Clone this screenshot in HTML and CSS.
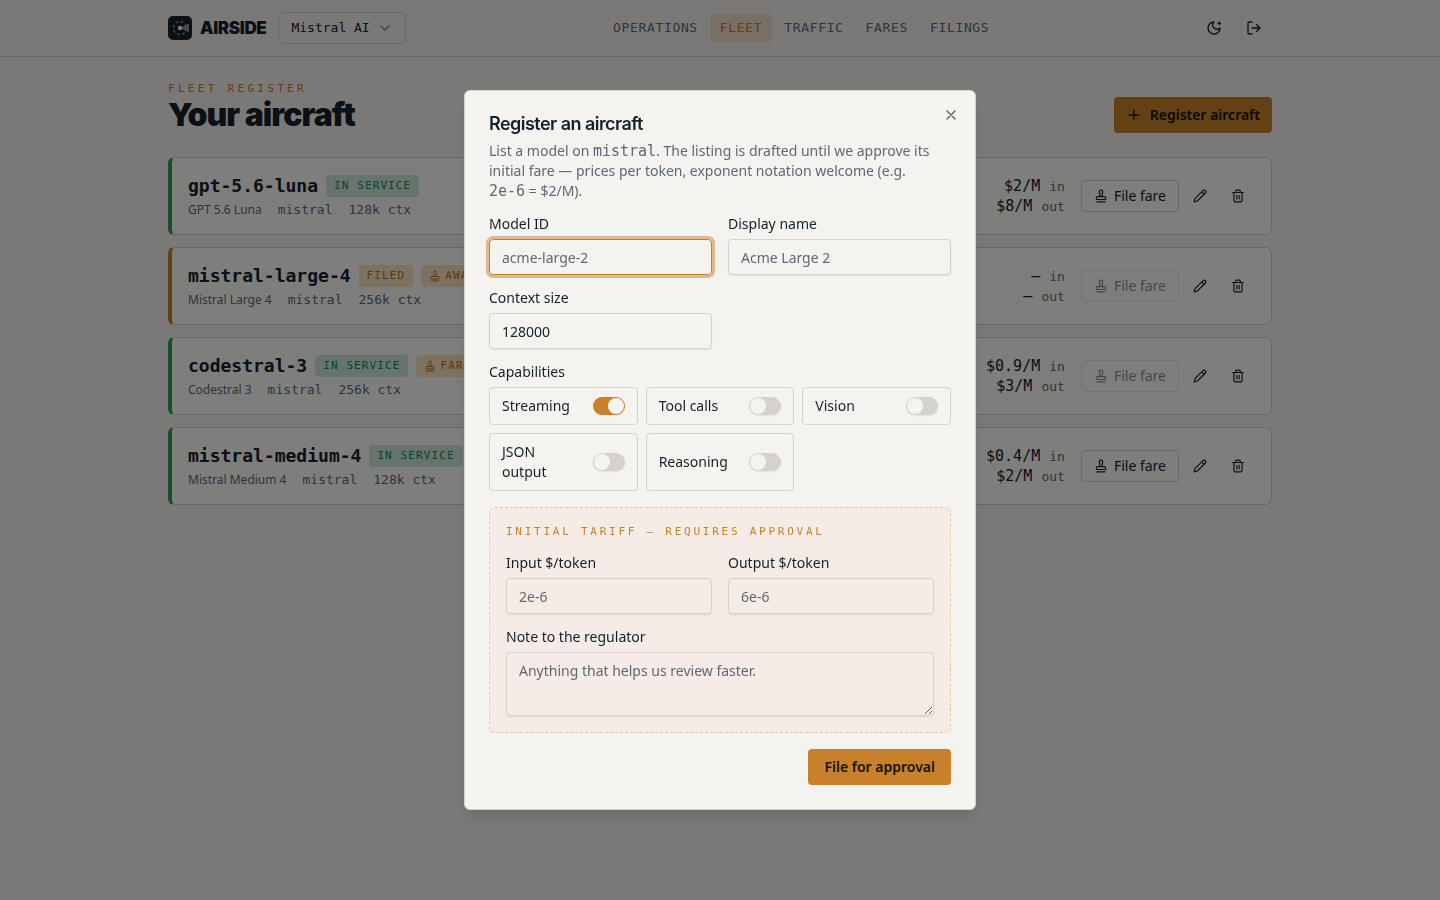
FILE: index.html
```html
<!DOCTYPE html>
<html lang="en">
<head>
<meta charset="utf-8">
<meta name="viewport" content="width=device-width, initial-scale=1">
<title>Airside – Fleet</title>
<link rel="stylesheet" href="styles.css">
</head>
<body>
<svg class="sprite" aria-hidden="true">
  <symbol id="stamp" viewBox="0 0 24 24"><path d="M5 22h14M19.27 13.73A2.5 2.5 0 0 0 17.5 13h-11A2.5 2.5 0 0 0 4 15.5V17a1 1 0 0 0 1 1h14a1 1 0 0 0 1-1v-1.500a2.500 2.500 0 0 0-.730-1.770ZM14 13V8.500C14 7 15 7 15 5a3 3 0 0 0-6 0c0 2 1 2 1 3.500V13"/></symbol>
  <symbol id="pencil" viewBox="0 0 24 24"><path d="M21.174 6.812a1 1 0 0 0-3.986-3.987L3.842 16.174a2 2 0 0 0-.5.830l-1.321 4.352a.5.5 0 0 0 .623.622l4.353-1.320a2 2 0 0 0 .830-.497zM15 5l4 4"/></symbol>
  <symbol id="trash" viewBox="0 0 24 24"><path d="M3 6h18M19 6v14c0 1-1 2-2 2H7c-1 0-2-1-2-2V6M8 6V4c0-1 1-2 2-2h4c1 0 2 1 2 2v2M10 11v6M14 11v6"/></symbol>
</svg>

<header class="topbar">
  <div class="container topbar-row">
    <div class="brand-area">
      <a class="brand" href="#">
        <svg class="logo" viewBox="0 0 24 24" aria-hidden="true"><rect width="24" height="24" rx="5" fill="#14202c"/><circle cx="12" cy="12" r="6.500" fill="none" stroke="#a3a8aa" stroke-width="1.200" stroke-dasharray="2.600 2.500"/><path d="M12 12l9-4.500v9z" fill="#8d9396"/><circle cx="12" cy="12" r="2.200" fill="#f4f3ef"/></svg>
        AIRSIDE
      </a>
      <button class="org" type="button">Mistral AI
        <svg class="icon" viewBox="0 0 24 24"><path d="m6 9 6 6 6-6"/></svg>
      </button>
    </div>
    <nav class="nav">
      <a href="#">Operations</a><a class="active" href="#">Fleet</a><a href="#">Traffic</a><a href="#">Fares</a><a href="#">Filings</a>
    </nav>
    <div class="tools">
      <button class="icon-button" type="button" aria-label="Toggle theme"><svg class="icon" viewBox="0 0 24 24"><path d="M12 3a6 6 0 0 0 9 9 9 9 0 1 1-9-9M20 3v4M22 5h-4"/></svg></button>
      <button class="icon-button" type="button" aria-label="Sign out"><svg class="icon" viewBox="0 0 24 24"><path d="M9 21H5a2 2 0 0 1-2-2V5a2 2 0 0 1 2-2h4M16 17l5-5-5-5M21 12H9"/></svg></button>
    </div>
  </div>
</header>

<main class="container page">
  <div class="page-head">
    <div>
      <p class="eyebrow wide">Fleet register</p>
      <h1>Your aircraft</h1>
    </div>
    <button class="primary register" type="button"><svg class="icon" viewBox="0 0 24 24"><path d="M5 12h14M12 5v14"/></svg>Register aircraft</button>
  </div>

  <div class="fleet">
    <article class="card">
      <div class="info">
        <div class="title-row"><h2>gpt-5.6-luna</h2><span class="badge ok">In service</span></div>
        <p class="meta"><span>GPT 5.6 Luna</span><span class="mono">mistral</span><span class="mono">128k ctx</span></p>
      </div>
      <div class="side">
        <div class="price"><div>$2/M <small>in</small></div><div>$8/M <small>out</small></div></div>
        <button class="file" type="button"><svg class="icon"><use href="#stamp"/></svg>File fare</button>
        <div class="actions"><button class="icon-button" type="button" aria-label="Edit"><svg class="icon"><use href="#pencil"/></svg></button><button class="icon-button" type="button" aria-label="Delete"><svg class="icon"><use href="#trash"/></svg></button></div>
      </div>
    </article>
    <article class="card filed">
      <div class="info">
        <div class="title-row"><h2>mistral-large-4</h2><span class="badge warn">Filed</span><span class="badge warn"><svg class="icon"><use href="#stamp"/></svg>Awaiting</span></div>
        <p class="meta"><span>Mistral Large 4</span><span class="mono">mistral</span><span class="mono">256k ctx</span></p>
      </div>
      <div class="side">
        <div class="price"><div>— <small>in</small></div><div>— <small>out</small></div></div>
        <button class="file" type="button" disabled><svg class="icon"><use href="#stamp"/></svg>File fare</button>
        <div class="actions"><button class="icon-button" type="button" aria-label="Edit"><svg class="icon"><use href="#pencil"/></svg></button><button class="icon-button" type="button" aria-label="Delete"><svg class="icon"><use href="#trash"/></svg></button></div>
      </div>
    </article>
    <article class="card">
      <div class="info">
        <div class="title-row"><h2>codestral-3</h2><span class="badge ok">In service</span><span class="badge warn"><svg class="icon"><use href="#stamp"/></svg>Fare</span></div>
        <p class="meta"><span>Codestral 3</span><span class="mono">mistral</span><span class="mono">256k ctx</span></p>
      </div>
      <div class="side">
        <div class="price"><div>$0.9/M <small>in</small></div><div>$3/M <small>out</small></div></div>
        <button class="file" type="button" disabled><svg class="icon"><use href="#stamp"/></svg>File fare</button>
        <div class="actions"><button class="icon-button" type="button" aria-label="Edit"><svg class="icon"><use href="#pencil"/></svg></button><button class="icon-button" type="button" aria-label="Delete"><svg class="icon"><use href="#trash"/></svg></button></div>
      </div>
    </article>
    <article class="card">
      <div class="info">
        <div class="title-row"><h2>mistral-medium-4</h2><span class="badge ok">In service</span></div>
        <p class="meta"><span>Mistral Medium 4</span><span class="mono">mistral</span><span class="mono">128k ctx</span></p>
      </div>
      <div class="side">
        <div class="price"><div>$0.4/M <small>in</small></div><div>$2/M <small>out</small></div></div>
        <button class="file" type="button"><svg class="icon"><use href="#stamp"/></svg>File fare</button>
        <div class="actions"><button class="icon-button" type="button" aria-label="Edit"><svg class="icon"><use href="#pencil"/></svg></button><button class="icon-button" type="button" aria-label="Delete"><svg class="icon"><use href="#trash"/></svg></button></div>
      </div>
    </article>
  </div>
</main>

<div class="overlay">
  <form class="dialog" role="dialog" aria-modal="true" aria-labelledby="dialog-title">
    <button class="close" type="button" aria-label="Close"><svg class="icon" viewBox="0 0 24 24"><path d="M18 6 6 18M6 6l12 12"/></svg></button>
    <div class="dialog-head">
      <h2 id="dialog-title">Register an aircraft</h2>
      <p>List a model on <span class="mono">mistral</span>. The listing is drafted until we approve its initial fare — prices per token, exponent notation welcome (e.g. <span class="formula"><span class="mono">2e-6</span> = $2/M).</span></p>
    </div>
    <div class="fields">
      <div class="field"><label for="model">Model ID</label><input class="focused" id="model" type="text" placeholder="acme-large-2"></div>
      <div class="field"><label for="name">Display name</label><input id="name" type="text" placeholder="Acme Large 2"></div>
      <div class="field"><label for="context">Context size</label><input id="context" type="text" value="128000"></div>
    </div>
    <div class="field">
      <span class="group-label" id="caps">Capabilities</span>
      <div class="toggles" role="group" aria-labelledby="caps">
        <label class="toggle">Streaming<input type="checkbox" role="switch" checked></label>
        <label class="toggle">Tool calls<input type="checkbox" role="switch"></label>
        <label class="toggle">Vision<input type="checkbox" role="switch"></label>
        <label class="toggle">JSON output<input type="checkbox" role="switch"></label>
        <label class="toggle">Reasoning<input type="checkbox" role="switch"></label>
      </div>
    </div>
    <section class="tariff">
      <p class="eyebrow">Initial tariff — requires approval</p>
      <div class="fields">
        <div class="field"><label for="input-price">Input $/token</label><input id="input-price" type="text" placeholder="2e-6"></div>
        <div class="field"><label for="output-price">Output $/token</label><input id="output-price" type="text" placeholder="6e-6"></div>
      </div>
      <div class="field"><label for="note">Note to the regulator</label><textarea id="note" placeholder="Anything that helps us review faster."></textarea></div>
    </section>
    <button class="primary submit" type="submit">File for approval</button>
  </form>
</div>
</body>
</html>
```
FILE: styles.css
```css
:root {
  --bg: #f4f3ef;
  --card: #fcfcfa;
  --ink: #14202c;
  --muted: #5f6874;
  --line: #d4d2cb;
  --amber: #c8802b;
  --sans: "Noto Sans", sans-serif;
  --mono: "DejaVu Sans Mono", monospace;
  --display: Inter, sans-serif;
}
* { box-sizing: border-box; }
body {
  margin: 0;
  min-height: 100vh;
  background: var(--bg);
  color: var(--ink);
  font: 14px/20px var(--sans);
}
h1, h2, p { margin: 0; }
a { color: inherit; text-decoration: none; }
button, input, textarea { font: inherit; color: inherit; }
button { padding: 0; border: 0; background: none; }
.sprite { display: none; }
.mono { font-family: var(--mono); }
.icon {
  width: 16px;
  height: 16px;
  flex: none;
  fill: none;
  stroke: currentColor;
  stroke-width: 2;
  stroke-linecap: round;
  stroke-linejoin: round;
}
.container { max-width: 1152px; margin: 0 auto; padding: 0 24px; }

.topbar { border-bottom: 1px solid var(--line); }
.topbar-row { height: 56px; display: flex; align-items: center; justify-content: space-between; }
.brand-area, .brand, .tools { display: flex; align-items: center; }
.brand-area { gap: 12px; }
.brand { gap: 8px; font: 900 17px/24px var(--display); letter-spacing: -0.02em; }
.logo { width: 24px; height: 24px; }
.org {
  width: 128px;
  height: 32px;
  padding: 0 12px;
  display: flex;
  align-items: center;
  justify-content: space-between;
  border: 1px solid var(--line);
  border-radius: 4px;
  font: 13px/20px var(--mono);
  white-space: nowrap;
}
.org .icon { opacity: .5; }
.nav { display: flex; gap: 2px; }
.nav a {
  padding: 4px 10px;
  border-radius: 4px;
  color: var(--muted);
  font: 13px/20px var(--mono);
  letter-spacing: 0.05em;
  text-transform: uppercase;
}
.nav .active { color: var(--amber); background: #f0dfcd; }
.tools { gap: 4px; }
.icon-button { width: 36px; height: 36px; display: grid; place-items: center; }

.page { padding-top: 24px; }
.page-head { display: flex; align-items: flex-end; justify-content: space-between; margin-bottom: 24px; }
.eyebrow {
  color: var(--amber);
  font: 11px/16px var(--mono);
  letter-spacing: 0.25em;
  text-transform: uppercase;
}
.wide { letter-spacing: 0.3em; }
h1 { font: 900 32px/36px var(--display); letter-spacing: -0.03em; }
.primary {
  height: 36px;
  padding: 0 16px;
  border-radius: 4px;
  background: var(--amber);
  color: #14130f;
  font-weight: 700;
}
.register { display: flex; align-items: center; gap: 8px; padding: 0 12px; }
.register, .submit { font-weight: 600; }

.fleet { display: grid; gap: 12px; }
.card {
  min-height: 78px;
  padding: 12px 16px;
  display: flex;
  align-items: center;
  justify-content: space-between;
  border: 1px solid var(--line);
  border-left: 4px solid #2f9e55;
  border-radius: 6px;
  background: var(--card);
}
.filed { border-left-color: var(--amber); }
.title-row { display: flex; align-items: center; gap: 8px; height: 28px; }
.title-row h2 { font: 700 18px/24px var(--mono); white-space: nowrap; }
.badge {
  height: 22px;
  padding: 0 8px;
  display: flex;
  align-items: center;
  gap: 4px;
  border-radius: 4px;
  font: 11px/16px var(--mono);
  letter-spacing: 0.1em;
  text-transform: uppercase;
}
.badge .icon { width: 12px; height: 12px; }
.ok { background: #cfe8da; color: #0c8a5a; }
.warn { background: #fbe3c2; color: #c46a10; }
.meta { display: flex; gap: 16px; color: var(--muted); font-size: 12px; }
.meta .mono { font-size: 13px; }
.side { display: flex; align-items: center; }
.price { margin-right: 16px; text-align: right; font: 15px/20px var(--mono); }
.price div { height: 20px; }
.price small { color: var(--muted); font-size: 13px; }
.file {
  height: 32px;
  padding: 0 12px;
  display: flex;
  align-items: center;
  gap: 6px;
  border: 1px solid var(--line);
  border-radius: 4px;
}
.file .icon, .actions .icon { width: 14px; height: 14px; }
.file:disabled { opacity: .5; }
.actions { display: flex; gap: 4px; margin-left: 4px; }
.actions .icon-button { width: 34px; height: 32px; }

.overlay {
  position: fixed;
  inset: 0;
  padding: 16px;
  display: grid;
  place-items: center;
  background: rgb(0 0 0 / 50%);
}
.dialog {
  position: relative;
  width: 100%;
  max-width: 512px;
  padding: 24px;
  display: grid;
  gap: 16px;
  border: 1px solid var(--line);
  border-radius: 6px;
  background: var(--bg);
  box-shadow: 0 10px 15px -3px rgb(0 0 0 / 10%), 0 4px 6px -4px rgb(0 0 0 / 10%);
}
.close { position: absolute; top: 16px; right: 16px; width: 16px; height: 16px; opacity: .7; }
.dialog-head { display: grid; gap: 8px; }
.dialog-head h2 { font: 600 18px/18px var(--display); letter-spacing: -0.03em; }
.dialog-head p { color: var(--muted); }
.dialog-head .mono { font-size: 15px; line-height: 16px; }
.formula { white-space: nowrap; }
.fields { display: grid; grid-template-columns: 1fr 1fr; gap: 16px; }
.field { display: grid; gap: 8px; line-height: 14px; }
.field input[type="text"], textarea {
  width: 100%;
  height: 36px;
  padding: 4px 12px;
  border: 1px solid var(--line);
  border-radius: 4px;
  background: transparent;
  box-shadow: 0 1px 2px rgb(0 0 0 / 8%);
  outline: none;
}
::placeholder { color: var(--muted); opacity: 1; }
.field input.focused[type="text"] { border-color: var(--amber); box-shadow: 0 0 0 3px rgb(200 128 43 / 50%); }
.field textarea { height: 64px; padding: 8px 12px; line-height: 20px; display: block; resize: vertical; }
.toggles { display: grid; grid-template-columns: repeat(3, 1fr); gap: 8px; }
.toggle {
  padding: 8px 12px;
  min-height: 38px;
  display: flex;
  align-items: center;
  justify-content: space-between;
  gap: 16px;
  border: 1px solid var(--line);
  border-radius: 4px;
  line-height: 20px;
}
.toggle input {
  appearance: none;
  flex: none;
  width: 32px;
  height: 18px;
  margin: 0;
  padding: 1px;
  display: flex;
  border-radius: 9px;
  background: var(--line);
  box-shadow: 0 1px 2px rgb(0 0 0 / 8%);
}
.toggle input::before { content: ""; width: 16px; height: 16px; border-radius: 50%; background: var(--bg); }
.toggle input:checked { background: var(--amber); justify-content: flex-end; }
.tariff {
  padding: 16px;
  display: grid;
  gap: 16px;
  border: 1px dashed #e6c79f;
  border-radius: 6px;
  background: #f4ece5;
}
.submit { justify-self: end; }
```
